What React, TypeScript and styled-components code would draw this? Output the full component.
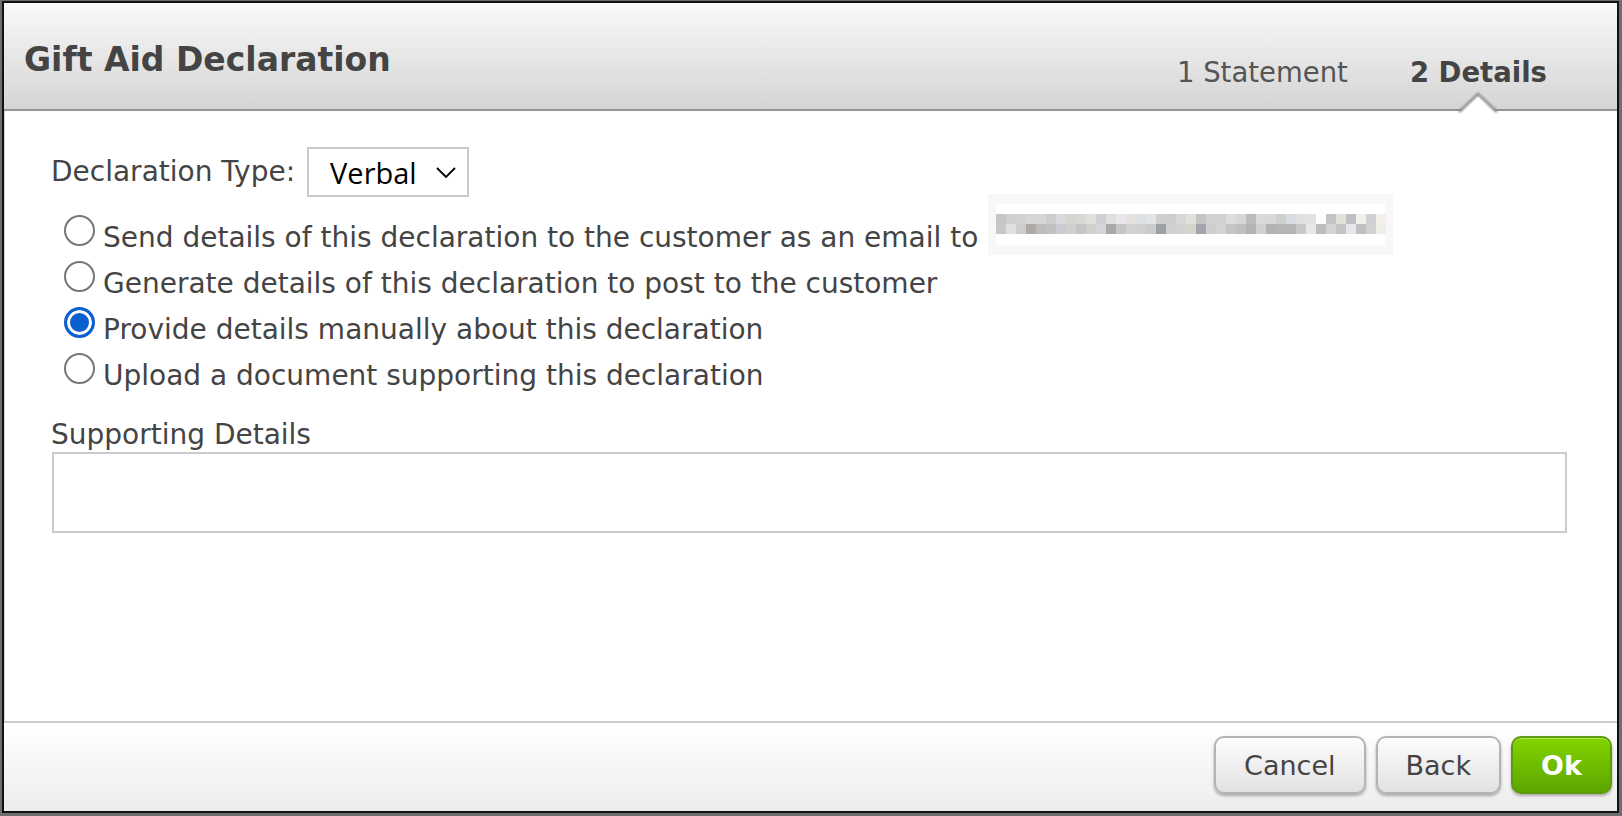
import React from "react";
import styled, { createGlobalStyle } from "styled-components";

const GlobalStyle = createGlobalStyle`
  html, body {
    margin: 0;
    padding: 0;
    width: 1622px;
    height: 816px;
    overflow: hidden;
    background: #6e6e6e;
  }
  * { box-sizing: border-box; }
`;

const FONT = `"DejaVu Sans", Verdana, sans-serif`;

const Dialog = styled.div`
  margin: 1px 0 0 2px;
  width: 1617px;
  height: 812px;
  border: 2px solid #111;
  box-shadow: inset 1px 0 0 #cfcfcf;
  background: #fff;
  display: flex;
  flex-direction: column;
  font-family: ${FONT};
  color: #444;
`;

const Header = styled.div`
  height: 108px;
  flex: none;
  display: flex;
  align-items: flex-start;
  justify-content: space-between;
  padding: 0 70px 0 20px;
  background: linear-gradient(#f9f9f9, #d5d5d5);
  border-bottom: 2px solid #959595;
`;

const Title = styled.h1`
  margin: 37px 0 0;
  font-size: 33px;
  font-weight: bold;
  line-height: normal;
  color: #444;
`;

const Tabs = styled.div`
  margin-top: 53px;
  display: flex;
  gap: 62px;
`;

const Tab = styled.span<{ $active?: boolean }>`
  position: relative;
  font-size: 27.5px;
  line-height: normal;
  font-weight: ${(p) => (p.$active ? "bold" : "normal")};
  color: ${(p) => (p.$active ? "#444" : "#555")};
`;

const Pointer = styled.svg`
  position: absolute;
  left: 50%;
  top: 37px;
  transform: translateX(-50%);
  overflow: visible;
`;

const Body = styled.div`
  flex: 1;
  padding: 36px 50px 0 47px;
  font-size: 28px;
`;

const TypeRow = styled.div`
  display: flex;
  align-items: center;
  gap: 12px;
  height: 50px;
`;

const Label = styled.span`
  line-height: 50px;
  color: #444;
`;

const Select = styled.div`
  width: 162px;
  height: 50px;
  border: 2px solid #c9c9c9;
  display: flex;
  align-items: center;
  justify-content: space-between;
  padding: 0 11px 0 21px;
  font-family: "Open Sans", "Noto Sans", sans-serif;
  font-size: 29px;
  color: #000;
  background: #fff;
`;

const RadioList = styled.div`
  margin-top: 18px;
  display: flex;
  flex-direction: column;
`;

const RadioRow = styled.label`
  height: 46px;
  display: flex;
  align-items: flex-start;
  padding-left: 13px;
  line-height: 46px;
  white-space: nowrap;
`;

const Radio = styled.span<{ $checked?: boolean }>`
  flex: none;
  width: 31px;
  height: 31px;
  margin-right: 8px;
  border-radius: 50%;
  border: ${(p) => (p.$checked ? "3px solid #0b5fcf" : "2px solid #767676")};
  background: ${(p) => (p.$checked ? "#0b5fcf" : "#fff")};
  box-shadow: ${(p) => (p.$checked ? "inset 0 0 0 3px #fff" : "none")};
`;

const RadioText = styled.span`
  color: #444;
`;

const BlurBox = styled.div`
  margin: -21px 0 0 10px;
  width: 405px;
  height: 61px;
  padding: 10px 0 0 8px;
  background: #f7f7f7;
  flex: none;
`;

const WhiteBand = styled.div`
  width: 389px;
  height: 41px;
  padding-top: 10px;
  background: #fff;
`;

const CellGrid = styled.div`
  display: grid;
  grid-template-columns: repeat(39, 10px);
  grid-auto-rows: 10px;
  width: 390px;
`;

const Cell = styled.span<{ $shade: string }>`
  background: ${(p) => p.$shade};
`;

const SupportLabel = styled.div`
  margin-top: 19px;
  line-height: 34px;
  color: #444;
`;

const TextArea = styled.textarea`
  display: block;
  width: 1515px;
  height: 81px;
  margin: 0 0 0 1px;
  border: 2px solid #cbcbcb;
  resize: none;
  outline: none;
  font-family: ${FONT};
  font-size: 28px;
`;

const Footer = styled.div`
  flex: none;
  height: 90px;
  border-top: 2px solid #cbcbcb;
  background: linear-gradient(#ffffff, #ededed);
  display: flex;
  justify-content: flex-end;
  align-items: flex-start;
  gap: 10px;
  padding: 13px 5px 0 0;
`;

const Button = styled.button<{ $primary?: boolean }>`
  height: 58px;
  padding: 0 28px;
  border-radius: 10px;
  font-family: ${FONT};
  font-size: 27px;
  line-height: 1;
  cursor: pointer;
  border: 2px solid ${(p) => (p.$primary ? "#5b9b0c" : "#b4b4b4")};
  background: ${(p) =>
    p.$primary
      ? "linear-gradient(#84d400, #5ca500)"
      : "linear-gradient(#fdfdfd, #e2e2e2)"};
  color: ${(p) => (p.$primary ? "#fff" : "#444")};
  font-weight: ${(p) => (p.$primary ? "bold" : "normal")};
  box-shadow: 0 2px 3px rgba(0, 0, 0, 0.3),
    inset 0 1px 0 ${(p) => (p.$primary ? "rgba(255,255,255,0.35)" : "#fff")};
`;

const row1 = [
  "#c8c6c4", "#cfd0d2", "#d4d2d1", "#d8d6d4", "#d6d6d6", "#cfcdcc", "#d9dade", "#d5d4d2",
  "#d9d8d6", "#e1e0dd", "#d0d0d4", "#e0dfdc", "#e8e8ea", "#e4e1de", "#dde0e3", "#e4e4e4",
  "#cfcfcf", "#cdcdcd", "#d8d7d5", "#e0e0dc", "#c7c4c6", "#d2d2d2", "#d0d2d1", "#dedcda",
  "#d6d6d6", "#bcbbb9", "#dad9d8", "#d8d8d8", "#d0d0d0", "#d8dce0", "#e0e0e0", "#e2e2e2",
  "#fdfdfd", "#c4c4c4", "#e3e0dc", "#bdbfc2", "#f0efeb", "#d0d0d3", "#f1efe8",
];
const row2 = [
  "#c9c7c5", "#dfdfe3", "#cdcdcd", "#aca9a7", "#bdbcbb", "#c2c0bf", "#c9cbd1", "#d0d0d0",
  "#c6c5c3", "#cfcfcb", "#d5d5d8", "#a8a8a8", "#c6c6c6", "#d3d1d0", "#cfcfd1", "#cccbc9",
  "#9aa0a4", "#cfcfcf", "#d2d2d2", "#d5d5d0", "#a8a2ab", "#cecece", "#d2d4d4", "#c5c5c5",
  "#bfbfbf", "#b3b3b3", "#d0d0d3", "#b2b2b2", "#b8b6b4", "#b6b5b3", "#c7c7c9", "#e6e7e8",
  "#bcbcbc", "#d5d3d0", "#c3c3c3", "#e5e6ea", "#c0c0c0", "#d1d1d1", "#f0eee8",
];

const options = [
  { text: "Send details of this declaration to the customer as an email to", email: true },
  { text: "Generate details of this declaration to post to the customer" },
  { text: "Provide details manually about this declaration", checked: true },
  { text: "Upload a document supporting this declaration" },
];

export default function App() {
  return (
    <>
      <GlobalStyle />
      <Dialog>
        <Header>
          <Title>Gift Aid Declaration</Title>
          <Tabs>
            <Tab>1 Statement</Tab>
            <Tab $active>
              2 Details
              <Pointer width="38" height="20" viewBox="0 0 38 20">
                <polygon points="0,20 19,1 38,20" fill="#fff" />
                <polyline
                  points="0,19 19,1 38,19"
                  fill="none"
                  stroke="#8d8d8d"
                  strokeWidth="2.5"
                  style={{ filter: "blur(0.8px)" }}
                />
                <polygon points="3,21 19,4 35,21" fill="#fff" />
              </Pointer>
            </Tab>
          </Tabs>
        </Header>
        <Body>
          <TypeRow>
            <Label>Declaration Type:</Label>
            <Select>
              <span>Verbal</span>
              <svg width="20" height="11" viewBox="0 0 20 11">
                <polyline points="1,1 10,10 19,1" fill="none" stroke="#000" strokeWidth="1.8" />
              </svg>
            </Select>
          </TypeRow>
          <RadioList>
            {options.map((o) => (
              <RadioRow key={o.text}>
                <Radio $checked={o.checked} />
                <RadioText>{o.text}</RadioText>
                {o.email && (
                  <BlurBox>
                    <WhiteBand>
                      <CellGrid>
                        {row1.map((c, i) => (
                          <Cell key={"a" + i} $shade={c} />
                        ))}
                        {row2.map((c, i) => (
                          <Cell key={"b" + i} $shade={c} />
                        ))}
                      </CellGrid>
                    </WhiteBand>
                  </BlurBox>
                )}
              </RadioRow>
            ))}
          </RadioList>
          <SupportLabel>Supporting Details</SupportLabel>
          <TextArea />
        </Body>
        <Footer>
          <Button>Cancel</Button>
          <Button>Back</Button>
          <Button $primary>Ok</Button>
        </Footer>
      </Dialog>
    </>
  );
}
